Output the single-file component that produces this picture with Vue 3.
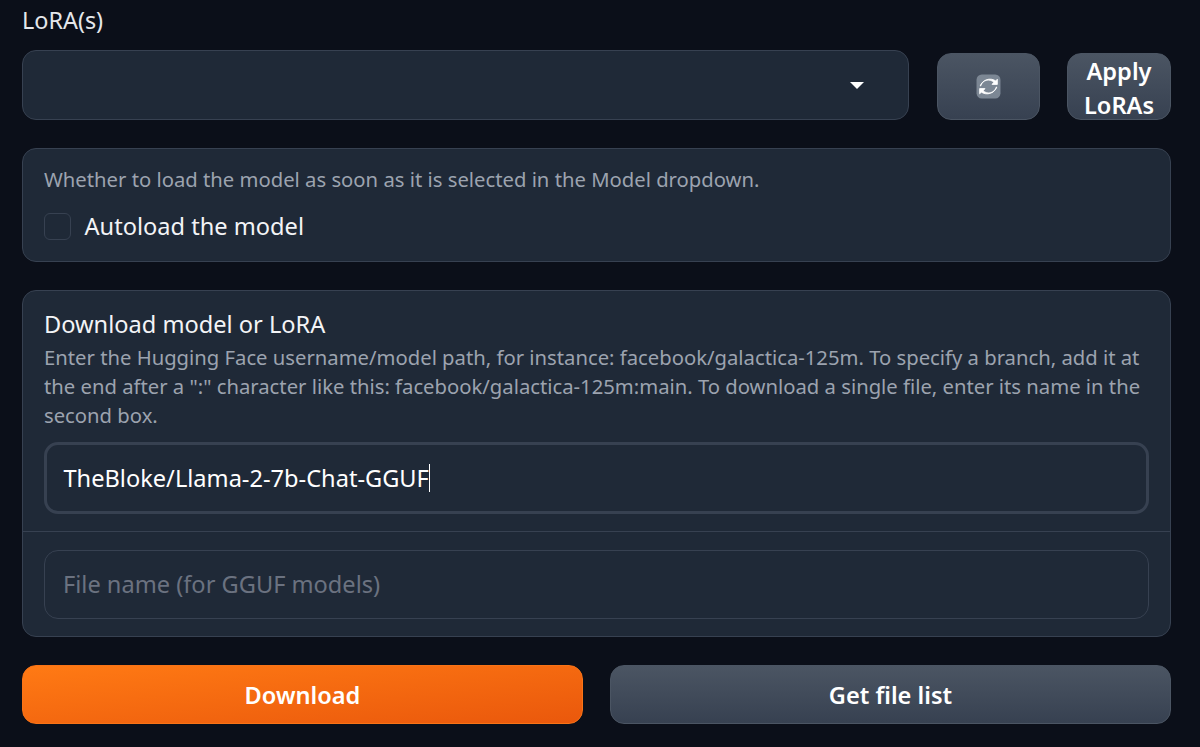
<template>
  <div class="page">
    <div class="lora-label">LoRA(s)</div>
    <div class="lora-row">
      <div class="dropdown"><span class="caret"></span></div>
      <button class="btn refresh">
        <svg width="25" height="25" viewBox="0 0 24 24">
          <rect x="0.5" y="0.5" width="23" height="23" rx="5" fill="#7c8794" />
          <path d="M4.5 10.5a7.6 7.6 0 0 1 12.6-3.6L15.4 9H20.5V4l-1.6 1.6A10 10 0 0 0 4 10.5z" fill="#fff" stroke="#fff" stroke-width="0.8" transform="translate(0 1)" />
          <path d="M19.5 13.5a7.6 7.6 0 0 1-12.6 3.6L8.6 15H3.5v5l1.6-1.6A10 10 0 0 0 20 13.5z" fill="#fff" stroke="#fff" stroke-width="0.8" transform="translate(0 -1)" />
        </svg>
      </button>
      <button class="btn apply">Apply LoRAs</button>
    </div>

    <div class="panel autoload">
      <div class="info">Whether to load the model as soon as it is selected in the Model dropdown.</div>
      <label class="check-row">
        <input v-model="autoload" type="checkbox" class="check" />
        <span>Autoload the model</span>
      </label>
    </div>

    <div class="panel download">
      <div class="download-top">
        <div class="title">Download model or LoRA</div>
        <div class="info desc">Enter the Hugging Face username/model path, for instance: facebook/galactica-125m. To specify a branch, add it at the end after a ":" character like this: facebook/galactica-125m:main. To download a single file, enter its name in the second box.</div>
        <div class="field focused">
          <span>{{ modelPath }}</span><span class="cursor"></span>
        </div>
      </div>
      <div class="download-bottom">
        <input v-model="fileName" class="field plain" placeholder="File name (for GGUF models)" />
      </div>
    </div>

    <div class="actions">
      <button class="btn big primary">Download</button>
      <button class="btn big">Get file list</button>
    </div>
  </div>
</template>

<script setup>
import { ref } from 'vue'

const autoload = ref(false)
const modelPath = ref('TheBloke/Llama-2-7b-Chat-GGUF')
const fileName = ref('')
</script>

<style>
html, body { background: #0b0f19; }
</style>

<style scoped>
.page {
  box-sizing: border-box;
  width: 1200px;
  height: 747px;
  overflow: hidden;
  padding: 6px 29px 0 22px;
  background: #0b0f19;
  color: #fff;
  font-family: "Noto Sans", "Liberation Sans", sans-serif;
}
.lora-label { font-size: 23.4px; line-height: 28px; color: #e5e7eb; margin-bottom: 16px; }
.lora-row { display: flex; align-items: flex-end; height: 70px; }
.dropdown {
  flex: 1;
  height: 70px;
  box-sizing: border-box;
  display: flex;
  align-items: center;
  justify-content: flex-end;
  padding-right: 44px;
  background: #1f2937;
  border: 1.5px solid #374151;
  border-radius: 14px;
}
.caret {
  width: 0;
  height: 0;
  border-left: 7px solid transparent;
  border-right: 7px solid transparent;
  border-top: 7px solid #fff;
}
.btn {
  box-sizing: border-box;
  border: 1.5px solid #4b5563;
  border-radius: 14px;
  background: linear-gradient(to bottom, #4b5563, #374151);
  color: #fff;
  font-family: inherit;
  font-weight: 600;
  cursor: pointer;
}
.refresh {
  width: 103px;
  height: 67px;
  margin-left: 28px;
  display: flex;
  align-items: center;
  justify-content: center;
  padding: 0;
}
.apply {
  width: 104px;
  height: 67px;
  margin-left: 27px;
  padding: 0;
  font-size: 23.6px;
  line-height: 34px;
}
.panel {
  box-sizing: border-box;
  background: #1f2937;
  border: 1.5px solid #374151;
  border-radius: 14px;
}
.autoload { margin-top: 28px; height: 114px; padding: 16px 21px 0; }
.info { font-size: 20.25px; line-height: 28px; color: #9ca3af; }
.check-row { display: flex; align-items: center; gap: 13.5px; margin-top: 15px; font-size: 23.6px; line-height: 36px; color: #f3f4f6; }
.check {
  appearance: none;
  width: 27px;
  height: 27px;
  margin: 0;
  background: #1f2937;
  border: 1.5px solid #374151;
  border-radius: 6px;
}
.download { margin-top: 27.5px; height: 347.5px; }
.download-top { box-sizing: border-box; height: 241px; padding: 15px 21px 0; border-bottom: 1.5px solid #374151; }
.title { font-size: 23.6px; line-height: 36px; color: #f3f4f6; }
.desc { line-height: 29px; margin-top: 1px; }
.field {
  box-sizing: border-box;
  display: flex;
  align-items: center;
  width: 100%;
  background: #1f2937;
  border: 1.5px solid #374151;
  border-radius: 14px;
  padding: 0 18px;
  color: #fff;
  font-family: inherit;
  font-size: 23.6px;
  outline: none;
}
.focused { height: 72px; margin-top: 12px; border-width: 3px; padding: 0 16.5px; }
.cursor { display: inline-block; width: 1.5px; height: 28px; background: #fff; }
.download-bottom { padding: 18px 21px 0; }
.plain { height: 69px; }
.plain::placeholder { color: #6b7280; opacity: 1; }
.actions { display: flex; gap: 27px; margin-top: 28px; }
.big { flex: 1; height: 59px; font-size: 23.6px; }
.primary {
  background: linear-gradient(to bottom right, #ff7a14, #ea580c);
  border-color: #f97316;
}
</style>
